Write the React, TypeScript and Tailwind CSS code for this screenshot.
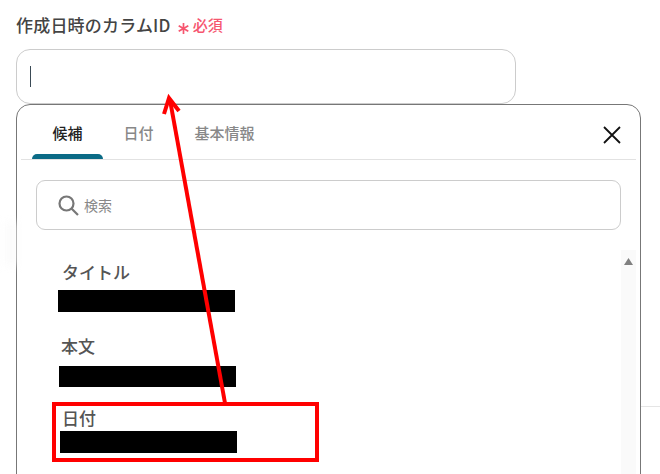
const TABS = [
  { label: '候補', active: true },
  { label: '日付', active: false },
  { label: '基本情報', active: false },
];

function SuggestItem({ label, labelClass, barClass }: { label: string; labelClass: string; barClass: string }) {
  return (
    <div>
      <div className={`text-[17px] leading-[24px] font-medium text-[#555] ${labelClass}`}>{label}</div>
      <div className={`w-[177px] bg-black ${barClass}`} />
    </div>
  );
}

export default function App() {
  return (
    <div className="relative h-[474px] w-[660px] overflow-hidden bg-white pl-4 pt-[13px] font-['Noto_Sans_CJK_JP',sans-serif]">
      {/* faint shadow + divider of the page behind the dropdown */}
      <div className="absolute left-[6px] top-[222px] h-[44px] w-[10px] bg-[#fafafa] blur-[4px]" />
      <div className="absolute left-[641px] top-[406px] h-px w-[19px] bg-[#e5e5e5]" />

      {/* Label */}
      <div className="flex h-[24px] items-center">
        <span className="text-[17px] font-medium leading-[24px] tracking-[0.2px] text-[#444]">作成日時のカラムID</span>
        <svg className="ml-[7px] mt-[6px]" width="11" height="11" viewBox="0 0 11 11" fill="none" stroke="#f6566f" strokeWidth="1.7">
          <path d="M5.5 0 V11 M0.7 2.7 L10.3 8.3 M10.3 2.7 L0.7 8.3" />
        </svg>
        <span className="ml-[4px] text-[15px] font-medium leading-[24px] text-[#f6566f]">必須</span>
      </div>

      {/* Input */}
      <div className="mt-[12px] flex h-[55px] w-[500px] items-center rounded-[14px] border border-[#ccc] pl-[13px]">
        <div className="h-[21px] w-px bg-[#3a4a55]" />
      </div>

      {/* Dropdown panel */}
      <div className="h-[420px] w-[625px] rounded-t-[14px] border border-[#777] px-1">
        <div className="relative flex h-[55px] items-end border-b border-[#e2e2e2] pl-[11px]">
          {TABS.map((t) => (
            <div
              key={t.label}
              className={`relative flex h-[54px] items-center justify-center px-[20.5px] pt-[3px] text-[15px] font-medium ${
                t.active ? 'text-[#222]' : 'text-[#888]'
              }`}
            >
              {t.label}
              {t.active && <div className="absolute inset-x-0 bottom-0 h-[5px] rounded-t-[5px] bg-[#0b6b86]" />}
            </div>
          ))}
          <svg className="absolute left-[582px] top-[21px]" width="18" height="18" viewBox="0 0 18 18" fill="none" stroke="#111" strokeWidth="1.8">
            <path d="M1 1 L17 17 M17 1 L1 17" />
          </svg>
        </div>

        {/* Search */}
        <div className="ml-[15px] mt-[20px] flex h-[50px] w-[585px] items-center rounded-[9px] border border-[#ccc] pl-[21px]">
          <svg width="21" height="21" viewBox="0 0 21 21" fill="none" stroke="#777" strokeWidth="2.2">
            <circle cx="8.5" cy="8.5" r="7" />
            <path d="M13.5 13.5 L20 20" />
          </svg>
          <span className="ml-[5px] text-[14px] text-[#888]">検索</span>
        </div>

        {/* List with scrollbar */}
        <div className="mt-[20px] flex">
          <div className="flex-1 pt-[10px]">
            <SuggestItem label="タイトル" labelClass="ml-[41px]" barClass="ml-[37px] mt-[6px] h-[22px]" />
            <SuggestItem label="本文" labelClass="ml-[40px] mt-[22px]" barClass="ml-[38px] mt-[8px] h-[21px]" />
            <SuggestItem label="日付" labelClass="ml-[41px] mt-[19px]" barClass="ml-[39px] mt-[1px] h-[22px]" />
          </div>
          <div className="flex h-[224px] w-[15px] justify-center bg-[#fafafa] pt-[8px]">
            <svg width="9" height="7" viewBox="0 0 9 7" fill="#808080"><path d="M4.5 0 L9 7 H0 Z" /></svg>
          </div>
        </div>
      </div>

      {/* Red annotation: frame + arrow */}
      <div className="absolute left-[52px] top-[402px] h-[60px] w-[267px] border-[4px] border-[#ff0000]" />
      <svg className="pointer-events-none absolute left-0 top-0" width="660" height="474" fill="none" stroke="#ff0000" strokeWidth="4">
        <path d="M225 403 L170 100" />
        <path d="M164 114 L169 98 L179 111" />
      </svg>
    </div>
  );
}
